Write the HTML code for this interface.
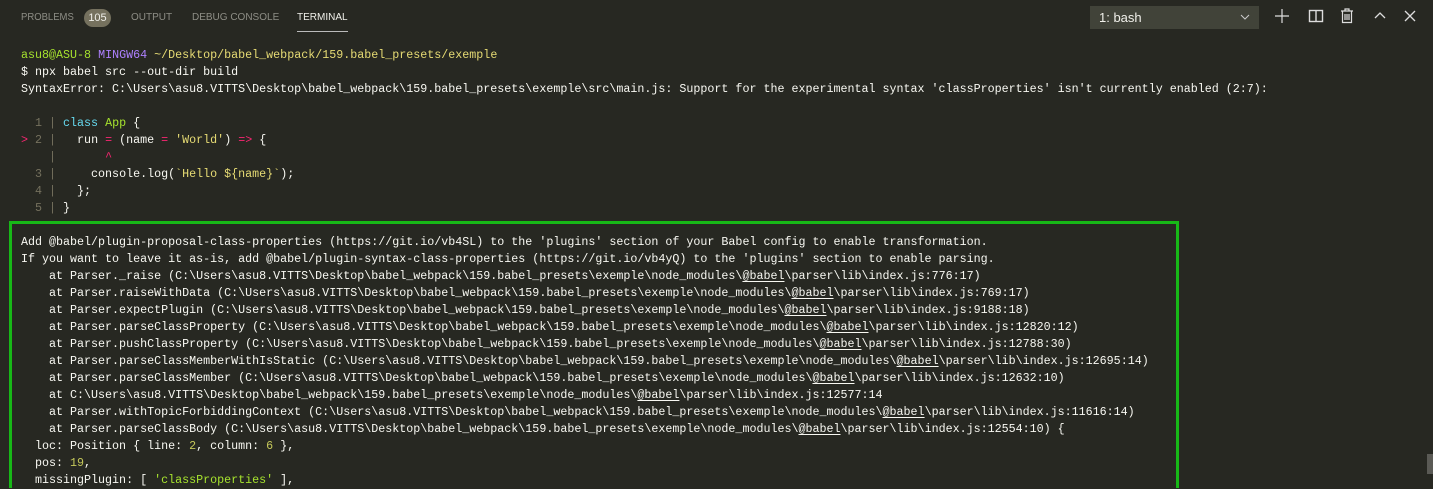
<!DOCTYPE html>
<html><head><meta charset="utf-8"><style>
body{margin:0;width:1433px;height:488px;background:#272822;overflow:hidden;position:relative;font-family:"Liberation Sans",sans-serif}
.tabs{position:absolute;top:0;left:0;right:0;height:36px}
.tab{position:absolute;top:12px;font-size:10px;color:#8e8e86;transform-origin:left;}
.badge{position:absolute;top:9px;left:84px;width:27px;height:18px;border-radius:9px;background:#75715e;color:#f0f0ea;font-size:11px;text-align:center;line-height:18px}
.term{position:absolute;left:21px;top:47px;font-family:"Liberation Mono",monospace;font-size:11.68px;line-height:17px;color:#f8f8f2;white-space:pre}
.g{color:#a6e22e}.p{color:#ae81ff}.y{color:#e6db74}.dim{color:#75715e}.c{color:#66d9ef}.r{color:#f92672}.n{color:#c5c85a}.s{color:#a6e22e}
u{text-decoration:underline;text-underline-offset:2px}
.box{position:absolute;left:9px;top:221px;width:1164px;height:264px;border:3px solid #17b817;border-bottom:none}
.sel{position:absolute;left:1090px;top:6px;width:169px;height:23px;background:#414339;color:#f0f0ea;font-size:13px;line-height:23px;padding-left:9px;box-sizing:border-box}
.ic{position:absolute;top:8px}
</style></head><body>
<div class="tabs">
<div class="tab" style="left:21px;transform:scaleX(0.95)">PROBLEMS</div><div class="badge">105</div>
<div class="tab" style="left:131px">OUTPUT</div>
<div class="tab" style="left:192px">DEBUG CONSOLE</div>
<div class="tab" style="left:297px;color:#f0f0ea">TERMINAL</div>
<div style="position:absolute;left:297px;top:31px;width:51px;height:1px;background:#bbb"></div>
<div class="sel">1: bash<svg style="position:absolute;right:9px;top:8px" width="10" height="7"><path d="M1 1l4 4 4-4" stroke="#ccc" fill="none"/></svg></div>
<svg class="ic" style="left:1274px" width="16" height="16"><path d="M8 1v14M1 8h14" stroke="#ddd" stroke-width="1.2"/></svg>
<svg class="ic" style="left:1308px" width="16" height="16"><rect x="1.5" y="2.5" width="13" height="11" fill="none" stroke="#ddd" stroke-width="1.4"/><path d="M8 2v12" stroke="#ddd" stroke-width="1.4"/></svg>
<svg class="ic" style="left:1340px" width="14" height="16"><path d="M1 3h12M5 3V1h4v2M2.5 3.5v11h9v-11M5 6v6M7 6v6M9 6v6" stroke="#ddd" fill="none" stroke-width="1.2"/></svg>
<svg class="ic" style="left:1373px" width="14" height="16"><path d="M2 10l5-5 5 5" stroke="#ddd" fill="none" stroke-width="1.3"/></svg>
<svg class="ic" style="left:1403px" width="14" height="16"><path d="M2 3l10 10M12 3L2 13" stroke="#ddd" fill="none" stroke-width="1.3"/></svg>
</div>
<div class="box"></div>
<div style="position:absolute;left:1427px;top:454px;width:6px;height:20px;background:#5a5a55"></div>
<div class="term"><span class="g">asu8@ASU-8</span> <span class="p">MINGW64</span> <span class="y">~/Desktop/babel_webpack/159.babel_presets/exemple</span>
$ npx babel src --out-dir build
SyntaxError: C:\Users\asu8.VITTS\Desktop\babel_webpack\159.babel_presets\exemple\src\main.js: Support for the experimental syntax 'classProperties' isn't currently enabled (2:7):

<span class="dim">  1 | </span><span class="c">class</span> <span class="g">App</span> {
<span class="r">&gt;</span><span class="dim"> 2 | </span>  run <span class="r">=</span> (name <span class="r">=</span> <span class="y">'World'</span>) <span class="r">=&gt;</span> {
<span class="dim">    | </span>      <span class="r">^</span>
<span class="dim">  3 | </span>    console.log(<span class="y">`Hello ${name}`</span>);
<span class="dim">  4 | </span>  };
<span class="dim">  5 | </span>}

Add @babel/plugin-proposal-class-properties (https://git.io/vb4SL) to the 'plugins' section of your Babel config to enable transformation.
If you want to leave it as-is, add @babel/plugin-syntax-class-properties (https://git.io/vb4yQ) to the 'plugins' section to enable parsing.
    at Parser._raise (C:\Users\asu8.VITTS\Desktop\babel_webpack\159.babel_presets\exemple\node_modules\<u>@babel</u>\parser\lib\index.js:776:17)
    at Parser.raiseWithData (C:\Users\asu8.VITTS\Desktop\babel_webpack\159.babel_presets\exemple\node_modules\<u>@babel</u>\parser\lib\index.js:769:17)
    at Parser.expectPlugin (C:\Users\asu8.VITTS\Desktop\babel_webpack\159.babel_presets\exemple\node_modules\<u>@babel</u>\parser\lib\index.js:9188:18)
    at Parser.parseClassProperty (C:\Users\asu8.VITTS\Desktop\babel_webpack\159.babel_presets\exemple\node_modules\<u>@babel</u>\parser\lib\index.js:12820:12)
    at Parser.pushClassProperty (C:\Users\asu8.VITTS\Desktop\babel_webpack\159.babel_presets\exemple\node_modules\<u>@babel</u>\parser\lib\index.js:12788:30)
    at Parser.parseClassMemberWithIsStatic (C:\Users\asu8.VITTS\Desktop\babel_webpack\159.babel_presets\exemple\node_modules\<u>@babel</u>\parser\lib\index.js:12695:14)
    at Parser.parseClassMember (C:\Users\asu8.VITTS\Desktop\babel_webpack\159.babel_presets\exemple\node_modules\<u>@babel</u>\parser\lib\index.js:12632:10)
    at C:\Users\asu8.VITTS\Desktop\babel_webpack\159.babel_presets\exemple\node_modules\<u>@babel</u>\parser\lib\index.js:12577:14
    at Parser.withTopicForbiddingContext (C:\Users\asu8.VITTS\Desktop\babel_webpack\159.babel_presets\exemple\node_modules\<u>@babel</u>\parser\lib\index.js:11616:14)
    at Parser.parseClassBody (C:\Users\asu8.VITTS\Desktop\babel_webpack\159.babel_presets\exemple\node_modules\<u>@babel</u>\parser\lib\index.js:12554:10) {
  loc: Position { line: <span class="n">2</span>, column: <span class="n">6</span> },
  pos: <span class="n">19</span>,
  missingPlugin: [ <span class="s">'classProperties'</span> ],</div>
</body></html>
